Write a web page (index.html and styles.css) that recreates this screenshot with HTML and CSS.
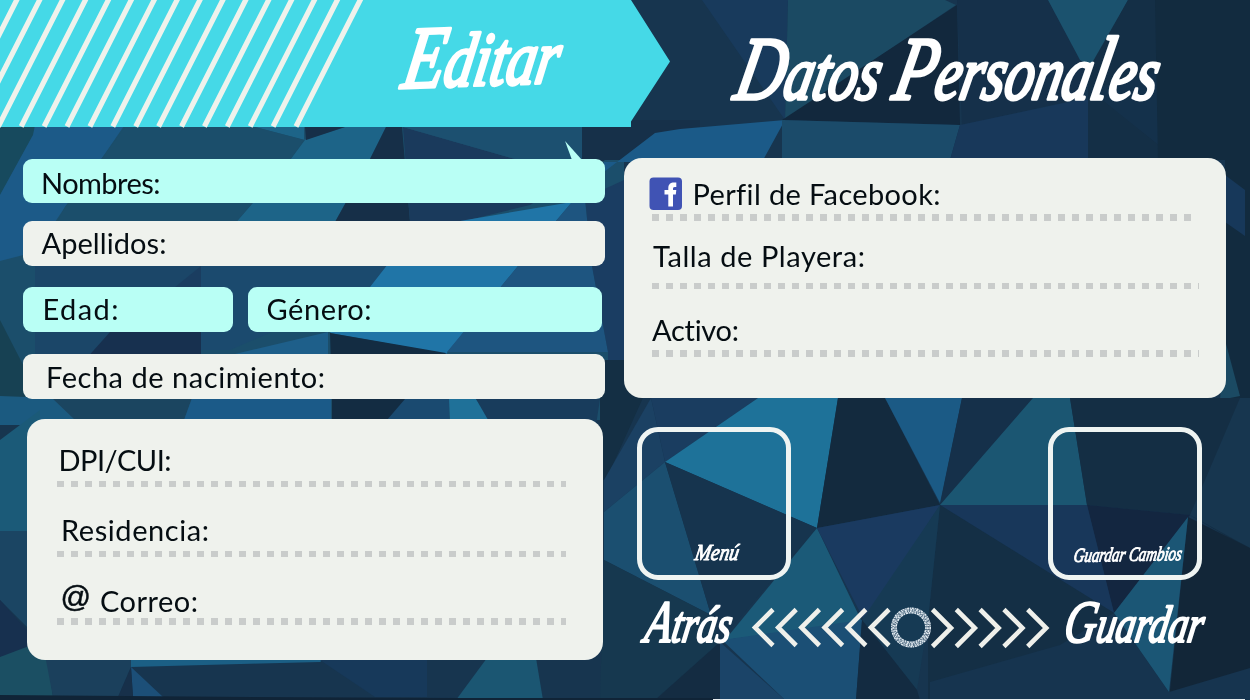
FILE: index.html
```html
<!DOCTYPE html>
<html lang="es">
<head>
<meta charset="utf-8">
<title>Editar Datos Personales</title>
<link rel="stylesheet" href="styles.css">
</head>
<body>
<div class="screen">
<svg class="backdrop" viewBox="0 0 1250 700" aria-hidden="true">
  <rect width="1250" height="700" fill="#17354f"/>
  <g class="facets">
    <path fill="#1b4e6b" d="M0 120H600V127H624V420H0z"/>
    <path fill="#174a5e" d="M0 120H38L33 135L0 195z"/>
    <path fill="#1c5a88" d="M36 120H128L102 158L65 207L35 252L0 261V195L33 135z"/>
    <path fill="#1d6488" d="M255 127H304V140L345 127H386L370 159L335 222L300 280H180L238 220L290 160L305 140z"/>
    <path fill="#1b4e6b" d="M125 127H255L304 140L290 160L238 220L190 266H35L65 207L102 158z"/>
    <path fill="#162f48" d="M305 127H345L306 140zM386 127H402L410 222L412 270H310L335 222L370 159z"/>
    <path fill="#1a3a5c" d="M403 127L515 159L570 180L530 205L460 222L400 250L410 222z"/>
    <path fill="#1c5070" d="M403 127H582V190L515 159z"/>
    <path fill="#163049" d="M582 120H700V160H605L582 175z"/>
    <path fill="#1b4668" d="M35 262H205V290L90 354H35z"/>
    <path fill="#174153" d="M0 320L36 390V400H0z"/>
    <path fill="#1a3d60" d="M201 266V360H85z"/>
    <path fill="#17304f" d="M201 332V360H85L110 332z"/>
    <path fill="#1b4a6e" d="M201 264H400L370 290L230 350H201z"/>
    <path fill="#1e5f8a" d="M235 354L328 332V360H235z"/>
    <path fill="#2075a7" d="M460 221L572 202L518 266L446 354L330 333L370 287L388 264z"/>
    <path fill="#1e5580" d="M572 202L585 200L592 266L608 352H447L518 266z"/>
    <path fill="#1a3d62" d="M585 198L624 180V420H608V352L592 266z"/>
    <path fill="#132c42" d="M330 333L446 353L430 380L405 400L385 425H332V400z"/>
    <path fill="#1b5a80" d="M0 396L53 398L82 425H0z"/>
    <path fill="#1b4560" d="M52 398H192L184 420H75z"/>
    <path fill="#1b5a88" d="M192 398H331V420H184z"/>
    <path fill="#1a4a70" d="M405 399H449V420H387z"/>
    <path fill="#1f7199" d="M449 399H476L491 420H450z"/>
    <path fill="#183c5c" d="M476 399H600L596 425H491z"/>
  </g>
  <g class="facets">
    <path fill="#1b5a88" d="M604 172L655 133L680 129L785 120L762 162H604z"/>
    <path fill="#183a5c" d="M702 0H788L785 120z"/>
    <path fill="#1b4a63" d="M788 0H945L956 5L785 120z"/>
    <path fill="#12283d" d="M957 5L960 125L782 120z"/>
    <path fill="#1b4b6a" d="M782 120L960 125L950 160H782z"/>
    <path fill="#15304a" d="M957 0H1048L1085 68L1075 100L962 125z"/>
    <path fill="#1b526e" d="M1048 0H1128L1092 67L1080 60z"/>
    <path fill="#18385a" d="M960 125L1078 100H1088V160H950z"/>
    <path fill="#142f46" d="M1088 70L1128 0H1250V160H1088z"/>
    <path fill="#17385a" d="M1090 90L1165 150L1160 70z" opacity=".3"/>
    <path fill="#122b3f" d="M1155 0H1250V410H1225V160H1158z"/>
    <path fill="#17385a" d="M1225 175L1245 190V236L1225 222z"/>
    <path fill="#1b4a63" d="M1225 340L1240 396L1220 400z"/>
  </g>
  <g class="facets">
    <path fill="#142f44" d="M600 360H660L606 480L600 480z"/>
    <path fill="#1b4163" d="M651 398L665 462L604 512V480z"/>
    <path fill="#1a3d60" d="M651 398H758L665 462z"/>
    <path fill="#1e7299" d="M758 398H838L817 528L665 462z"/>
    <path fill="#1b4f70" d="M665 462L711 615L604 560V512z"/>
    <path fill="#16344e" d="M665 462L817 528L725 635L711 615z"/>
    <path fill="#132a3e" d="M838 398H885L940 505L817 528z"/>
    <path fill="#1b5a85" d="M885 398H962L940 503z"/>
    <path fill="#15304a" d="M962 398H1033L940 505z"/>
    <path fill="#1b5672" d="M1033 398H1070L1087 505H940z"/>
    <path fill="#142e44" d="M1070 398H1250V550L1190 515L1087 505z"/>
    <path fill="#17364f" d="M1240 398L1205 480L1190 515L1250 548V398z"/>
    <path fill="#132640" d="M1087 505L1190 515L1114 613z"/>
    <path fill="#18375a" d="M940 505H1087L1114 613z"/>
    <path fill="#142f45" d="M940 505L1114 613L1169 692L928 700V620z"/>
    <path fill="#122638" d="M1188 517L1250 548V700H1169z"/>
    <path fill="#16344f" d="M930 682L1060 645L1114 613L1169 692L1250 668V700H930z"/>
    <path fill="#1b5675" d="M1188 517L1114 613L1169 692z"/>
    <path fill="#1b5a78" d="M817 528L862 622L725 640z"/>
    <path fill="#1a3a60" d="M817 528L940 505L865 622z"/>
    <path fill="#163a54" d="M940 505L928 620L917 690L862 620z"/>
    <path fill="#1b4f75" d="M722 640L862 620L856 700H785z"/>
    <path fill="#132b41" d="M862 620L917 690L920 700H856z"/>
    <path fill="#16384f" d="M604 560L711 615L720 642L655 700H600z"/>
    <path fill="#1b4468" d="M720 642L785 700H720z"/>
    <path fill="#142c42" d="M720 642V700H655z"/>
  </g>
  <g class="facets">
    <path fill="#1b5a78" d="M0 440L40 410V531H0z"/>
    <path fill="#1b4563" d="M0 531H40V640L0 600z"/>
    <path fill="#17304f" d="M0 600L40 645L0 657z"/>
    <path fill="#1b4f63" d="M0 657L45 640L53 697H0z"/>
    <path fill="#1b405c" d="M45 655H131V667L118 697H53z"/>
    <path fill="#1b5f85" d="M131 655H330L320 662L131 667z"/>
    <path fill="#1c4f78" d="M131 667L163 697H133z"/>
    <path fill="#17304a" d="M131 667L118 697H133z"/>
    <path fill="#17395a" d="M320 660H427V697H375z"/>
    <path fill="#1b5672" d="M487 658H536L543 700H456z"/>
  </g>
  <path fill="#102437" d="M0 695L250 697L456 698H715V700H0z"/>
  <path fill="#e9eef0" d="M713 699H1245V700H713z"/>
</svg>

<header class="header">
  <svg class="banner" viewBox="0 0 670 128" role="heading" aria-label="Editar">
    <path fill="#45d9e7" d="M0 0H631L670 61.500L631 121.500V127H0z"/>
    <g stroke="#eff2ec" stroke-width="5.200">
      <path d="M296 126.500l66-130M273.100 126.500l66-130M250.200 126.500l66-130M227.300 126.500l66-130M204.400 126.500l66-130M181.500 126.500l66-130M158.600 126.500l66-130M135.700 126.500l66-130M112.800 126.500l66-130M89.900 126.500l66-130M67 126.500l66-130M44.100 126.500l66-130M21.200 126.500l66-130M-1.700 126.500l66-130M-24.600 126.500l66-130M-47.500 126.500l66-130"/>
    </g>
    <text class="script" stroke-width="3.400" font-size="76" transform="translate(400 88) rotate(-2) skewX(-12)" textLength="156" lengthAdjust="spacingAndGlyphs"><tspan font-size="88">E</tspan>ditar</text>
  </svg>
  <svg class="title" viewBox="0 0 580 127" role="heading" aria-label="Datos Personales">
    <text class="script" stroke-width="3.400" font-size="76" transform="translate(62 99) skewX(-12)" textLength="422" lengthAdjust="spacingAndGlyphs"><tspan font-size="90">D</tspan>atos <tspan font-size="90">P</tspan>ersona<tspan font-size="90">l</tspan>es</text>
  </svg>
</header>

<main class="content">
  <section class="left">
    <div class="bar mint first">
      <svg class="label"><text x="18" y="35" textLength="119.500">Nombres:</text></svg>
      <svg class="spike" viewBox="0 0 18 19"><path d="M0 0L17 19H7z" fill="#b9fff5"/></svg>
    </div>
    <div class="bar second"><svg class="label"><text x="18.500" y="33" textLength="125">Apellidos:</text></svg></div>
    <div class="pair">
      <div class="bar mint age"><svg class="label"><text x="19.500" y="33" textLength="76">Edad:</text></svg></div>
      <div class="bar mint gender"><svg class="label"><text x="18.500" y="33" textLength="105">Género:</text></svg></div>
    </div>
    <div class="bar"><svg class="label"><text x="23" y="34" textLength="279">Fecha de nacimiento:</text></svg></div>
    <div class="card identity">
      <div class="field f62"><svg class="label"><text x="1.500" y="52" textLength="113">DPI/CUI:</text></svg><i class="dots"></i></div>
      <div class="field f64"><svg class="label"><text x="4" y="54" textLength="148">Residencia:</text></svg><i class="dots"></i></div>
      <div class="field f62"><svg class="label"><text class="at" x="3.500" y="50" textLength="30.500" lengthAdjust="spacingAndGlyphs">@</text><text x="43" y="55" textLength="98">Correo:</text></svg><i class="dots tall"></i></div>
    </div>
  </section>

  <section class="right">
    <div class="card profile">
      <div class="field r56"><svg class="label">
        <rect x="-2.500" y="19.500" width="32.500" height="32.500" rx="4" fill="#4053b4"/>
        <path fill="#fff" d="M16.300 48.500V36.500H12.500V32H16.300V30C16.300 26.300 18.600 24.500 22 24.500H24.300V29H22.800C21.300 29 21 29.700 21 31V32H24.300L23.800 36.500H21V48.500z"/>
        <text x="40.500" y="47" textLength="248">Perfil de Facebook:</text></svg><i class="dots tall"></i></div>
      <div class="field r62"><svg class="label"><text x="1" y="46" textLength="212">Talla de Playera:</text></svg><i class="dots wide"></i></div>
      <div class="field r61"><svg class="label"><text x="0" y="52" textLength="87">Activo:</text></svg><i class="dots tall wide"></i></div>
    </div>
    <div class="buttons">
      <div class="tile"><svg class="caption"><text class="script" stroke-width="1" font-size="23" transform="translate(52 128) skewX(-10)" textLength="44" lengthAdjust="spacingAndGlyphs">Menú</text></svg></div>
      <div class="tile"><svg class="caption"><text class="script" stroke-width="1" font-size="20" transform="translate(20 130) rotate(-1) skewX(-10)" textLength="108" lengthAdjust="spacingAndGlyphs">Guardar Cambios</text></svg></div>
    </div>
    <nav class="nav">
      <svg class="back" viewBox="0 0 110 70"><text class="script" stroke-width="2.200" font-size="52" transform="translate(8 47) skewX(-10)" textLength="86" lengthAdjust="spacingAndGlyphs"><tspan font-size="60">A</tspan>trás</text></svg>
      <svg class="arrows" viewBox="745 595 310 70" aria-hidden="true">
        <g fill="none" stroke="#eff0eb" stroke-width="4.600">
          <path d="M773 609.500L755 627.500L773 645.500M796.200 609.500l-18 18l18 18M819.400 609.500l-18 18l18 18M842.600 609.500l-18 18l18 18M865.800 609.500l-18 18l18 18M889 609.500l-18 18l18 18"/>
          <path d="M932.500 609.500l18.500 18.500l-18.500 18.500M956.300 609.500l18.500 18.500l-18.500 18.500M980.100 609.500l18.500 18.500l-18.500 18.500M1003.900 609.500l18.500 18.500l-18.500 18.500M1027.700 609.500l18.500 18.500l-18.500 18.500"/>
        </g>
        <circle cx="911" cy="627.500" r="17" fill="none" stroke="#8fa3b5" stroke-opacity=".5" stroke-width="6"/>
        <g fill="none" stroke="#e4ecf2" stroke-width="1.400">
          <circle cx="911" cy="627.500" r="19.300" stroke-dasharray="2 1.100 1 .7"/>
          <circle cx="911" cy="627.500" r="17.800" stroke-dasharray="1.300 1.500 2 .9"/>
          <circle cx="911" cy="627.500" r="16.300" stroke-dasharray="1.700 1.200 .8 1"/>
          <circle cx="911" cy="627.500" r="14.800" stroke-dasharray="1.500 1.100 2.200 .8"/>
        </g>
      </svg>
      <svg class="save" viewBox="0 0 160 70"><text class="script" stroke-width="2.200" font-size="52" transform="translate(7 47) skewX(-10)" textLength="139" lengthAdjust="spacingAndGlyphs"><tspan font-size="60">G</tspan>uardar</text></svg>
    </nav>
  </section>
</main>
</div>
</body>
</html>
```
FILE: styles.css
```css
* { box-sizing: border-box; }
body { margin: 0; font-family: Lato, "Liberation Sans", sans-serif; }
svg { display: block; overflow: visible; }
.screen { position: relative; width: 1250px; height: 700px; }
.backdrop { position: absolute; inset: 0; width: 1250px; height: 700px; overflow: hidden; }
.facets { filter: blur(.7px); }
.header { position: relative; display: flex; height: 127px; }
.banner { width: 670px; height: 128px; flex: none; }
.title { width: 580px; height: 127px; flex: none; }
.script {
  font-family: "Liberation Serif", serif;
  font-weight: 400;
  font-style: italic;
  fill: #fff;
  stroke: #fff;
  stroke-linejoin: round;
}
.content { position: relative; display: flex; gap: 18.5px; padding-left: 23px; }
.left { width: 582px; padding-top: 32px; flex: none; }
.right { width: 602px; padding-top: 31px; flex: none; }
.bar { position: relative; height: 45px; border-radius: 9px; background: #eff2ed; }
.mint { background: #b9fff5; }
.first { height: 44px; margin-bottom: 18px; }
.second { margin-bottom: 21px; }
.pair { display: flex; gap: 15px; margin-bottom: 22px; }
.age { width: 210px; }
.gender { width: 354px; }
.spike { position: absolute; right: 22px; top: -18px; width: 18px; height: 19px; }
.label { width: 100%; height: 100%; font-size: 29px; fill: #050d12; font-variant-ligatures: none; }
.at { font-family: "Liberation Sans", sans-serif; font-size: 30px; stroke: #050d12; stroke-width: .5px; }
.card { background: #eff2ed; border-radius: 18px; }
.identity { width: 576px; height: 241px; margin: 20px 0 0 4px; padding-left: 30.4px; }
.profile { height: 240px; padding-left: 28px; }
.field { display: flex; flex-direction: column; }
.field .label { flex: 1; min-height: 0; }
.f62 { height: 68px; }
.f64 { height: 70px; }
.r56 { height: 63px; }
.r62 { height: 68px; }
.r61 { height: 68px; }
.dots { height: 6px; width: 509px; flex: none; background: repeating-linear-gradient(90deg, #c9cccb 0 7px, transparent 7px 14px); }
.tall { height: 7px; }
.profile .dots { width: 541px; }
.profile .wide { width: 547px; }
.buttons { display: flex; justify-content: space-between; padding: 29px 24px 0 13.5px; }
.tile { width: 154px; height: 153px; border: 5px solid #eff4f2; border-radius: 21px; }
.caption { width: 100%; height: 100%; }
.nav { display: flex; padding: 15px 0 0 11.5px; }
.back { width: 110px; height: 70px; }
.arrows { width: 310px; height: 70px; }
.save { width: 160px; height: 70px; }
```
